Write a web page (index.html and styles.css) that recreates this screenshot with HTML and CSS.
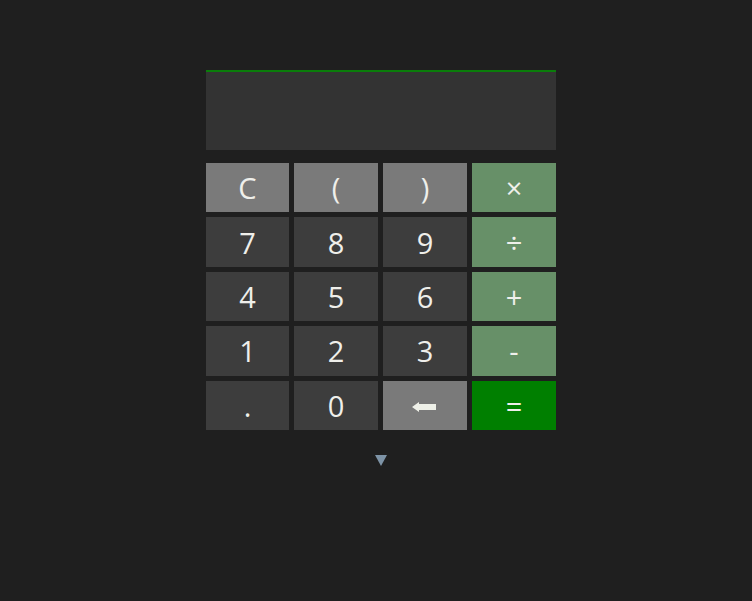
FILE: index.html
```html
<!DOCTYPE html>
<html>
<head>
<meta charset="utf-8">
<link rel="stylesheet" href="styles.css">
</head>
<body>
<div class="wrap">
  <div class="calc">
    <div class="display"></div>
    <div class="keys">
      <div class="key light">C</div>
      <div class="key light">(</div>
      <div class="key light">)</div>
      <div class="key op">×</div>
      <div class="key">7</div>
      <div class="key">8</div>
      <div class="key">9</div>
      <div class="key op">÷</div>
      <div class="key">4</div>
      <div class="key">5</div>
      <div class="key">6</div>
      <div class="key op">+</div>
      <div class="key">1</div>
      <div class="key">2</div>
      <div class="key">3</div>
      <div class="key op">-</div>
      <div class="key">.</div>
      <div class="key">0</div>
      <div class="key light"><svg class="back" width="24" height="10" viewBox="0 0 24 10"><path d="M0 5 L7 0 L7 2 L24 2 L24 8 L7 8 L7 10 Z" fill="#eef0e8"/></svg></div>
      <div class="key eq">=</div>
    </div>
    <div class="more"><svg width="12" height="11" viewBox="0 0 12 11"><path d="M0 0 L12 0 L6 11 Z" fill="#7d93a6"/></svg></div>
  </div>
</div>
</body>
</html>
```

FILE: styles.css
```css
html, body {
  margin: 0;
  padding: 0;
  background: #1f1f1f;
  height: 100%;
}
body {
  font-family: "Open Sans", "Noto Sans", sans-serif;
}
.wrap {
  width: 360px;
  margin: 0 auto;
  padding-top: 70px;
}
.calc {
  width: 350px;
  margin-left: 10px;
}
.display {
  height: 78px;
  background: #333333;
  border-top: 2px solid #0a7d0a;
}
.keys {
  margin-top: 13px;
  display: grid;
  grid-template-columns: 83px 84px 84px 84px;
  grid-template-rows: repeat(5, 1fr);
  gap: 5px;
  height: 267px;
}
.key {
  background: #3d3d3d;
  color: #efefeb;
  font-size: 29px;
  display: flex;
  align-items: center;
  justify-content: center;
  line-height: 1;
}
.key.light {
  background: #7a7a7a;
}
.key.op {
  background: #679068;
}
.key.eq {
  background: #007f00;
}
.back {
  display: block;
  margin-top: 3px;
  margin-left: -2px;
}
.more {
  display: flex;
  justify-content: center;
  margin-top: 25px;
  padding-right: 1px;
}
.more svg {
  display: block;
}
```
